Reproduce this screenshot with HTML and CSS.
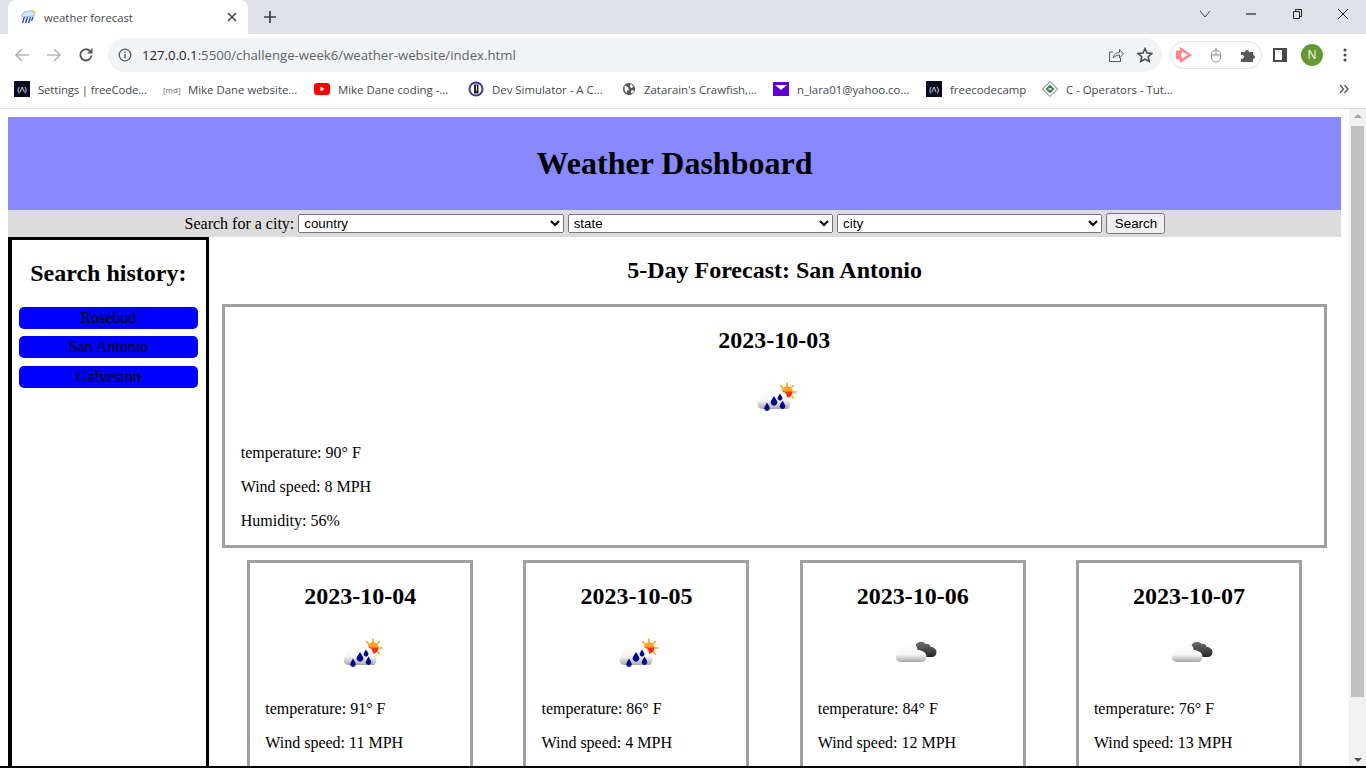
FILE: index.html
```html
<!DOCTYPE html>
<html lang="en">
<head>
  <meta charset="UTF-8" />
  <meta name="viewport" content="width=device-width, initial-scale=1.0"/>
  <title>weather forecast</title>
  <link rel="stylesheet" href="styles.css">
</head>
<body>

    <svg class="defs" width="0" height="0" aria-hidden="true">
        <defs>
            <linearGradient id="cloudFill" x1="0" y1="0" x2="0" y2="1">
                <stop offset="0" stop-color="#ffffff"/>
                <stop offset="0.6" stop-color="#f6f6f6"/>
                <stop offset="1" stop-color="#a8a8a8"/>
            </linearGradient>
            <linearGradient id="darkFill" x1="0" y1="0" x2="0" y2="1">
                <stop offset="0" stop-color="#707070"/>
                <stop offset="1" stop-color="#262626"/>
            </linearGradient>
            <filter id="soft"><feGaussianBlur stdDeviation="0.35"/></filter>
            <symbol id="rainSun" viewBox="0 0 50 50">
                <g filter="url(#soft)">
                    <g stroke="#ffa520" stroke-width="1.6" stroke-linecap="round">
                        <path d="M38 11v3M44.500 13.500l-2 2M47 20h-3M31.500 13.500l2 2M44.500 26l-2-2"/>
                    </g>
                    <circle cx="38" cy="20" r="5.500" fill="#f5300c"/>
                    <path d="M38 14.500a5.500 5.500 0 0 1 5.500 5h-11a5.500 5.500 0 0 1 5.500-5z" fill="#ffa520"/>
                    <path d="M14 37c-6 0-7-7-3-9-1-7 6-10 9-8 2-6 11-7 14 0 4 0 4 5 4 6 4 1 5 7 1 11z" fill="url(#cloudFill)"/>
                    <path d="M18 30.500l-2.400 4.200a2.800 2.800 0 1 0 4.800 0z" fill="#050a8c"/>
                    <path d="M25 24l-2.800 4.500a3.300 3.300 0 1 0 5.600 0z" fill="#050a8c"/>
                    <path d="M31 21.500l-2 3.300a2.400 2.400 0 1 0 4 0z" fill="#050a8c"/>
                    <path d="M33.500 28.500l-2.400 4.200a2.800 2.800 0 1 0 4.800 0z" fill="#050a8c"/>
                </g>
            </symbol>
            <symbol id="cloudDark" viewBox="0 0 50 50">
                <g filter="url(#soft)">
                    <path d="M26.500 21c0-6 7-10 11-5 3-1 5 1 5 3 3 0 6 2 6 5 0 3-2 5-5 5H31z" fill="url(#darkFill)"/>
                    <path d="M13 34c-5 0-7-6-3-9 0-3 2-5 5-5 2-5 9-6 12-3 2 1 2.500 3 2.500 5 4 0 9 2 9 7 0 3-2 5-5 5z" fill="url(#cloudFill)"/>
                </g>
            </symbol>
        </defs>
    </svg>

    <!-- tab strip -->
    <div class="tabstrip">
        <div class="tab">
            <svg class="favicon" viewBox="0 0 16 16" width="16" height="16">
                <path d="M3 8c-2 0-2-3 0-3 0-2 3-3 4-2 1-2 5-2 6 0 2 0 2 3 1 4z" fill="#cfe6fa" stroke="#7aa7d8" stroke-width="0.7"/>
                <path d="M12 1.500a2.500 2.500 0 0 1 3 2.500" fill="none" stroke="#f2d91a" stroke-width="1.2"/>
                <path d="M4.500 8l-2 6M7.500 8l-2 6M10.500 8l-2 6M13 8l-1.500 4" fill="none" stroke="#1030e0" stroke-width="1.2"/>
            </svg>
            <span class="tab-title">weather forecast</span>
            <svg class="tab-close" viewBox="0 0 10 10" width="10" height="10">
                <path d="M1 1l8 8M9 1l-8 8" stroke="#45484c" stroke-width="1.6"/>
            </svg>
        </div>
        <svg class="new-tab" viewBox="0 0 12 12" width="12" height="12">
            <path d="M6 0v12M0 6h12" stroke="#3c4043" stroke-width="1.7"/>
        </svg>
        <div class="window-controls">
            <svg viewBox="0 0 12 8" width="12" height="8"><path d="M1 1l5 6 5-6" fill="none" stroke="#3c4043" stroke-width="1"/></svg>
            <svg viewBox="0 0 12 8" width="12" height="8"><path d="M1 4h10" stroke="#222" stroke-width="1.2"/></svg>
            <svg viewBox="0 0 12 12" width="12" height="12"><path d="M2.500 3.500h6v7h-6zM4.500 3.500v-2h6v7h-2" fill="none" stroke="#222" stroke-width="1"/></svg>
            <svg viewBox="0 0 12 12" width="12" height="12"><path d="M1 1l10 10M11 1l-10 10" stroke="#222" stroke-width="1"/></svg>
        </div>
    </div>

    <!-- address bar -->
    <div class="toolbar">
        <div class="nav-buttons">
            <svg viewBox="0 0 16 16" width="16" height="16"><path d="M15 8H2M8 2L2 8l6 6" fill="none" stroke="#b4b6b9" stroke-width="1.7"/></svg>
            <svg viewBox="0 0 16 16" width="16" height="16"><path d="M1 8h13M8 2l6 6-6 6" fill="none" stroke="#b4b6b9" stroke-width="1.7"/></svg>
            <svg viewBox="0 0 16 16" width="16" height="16"><path d="M13.500 8.500A5.600 5.600 0 1 1 12 4" fill="none" stroke="#55585c" stroke-width="1.8"/><path d="M14.500 1v5.500H9z" fill="#55585c"/></svg>
        </div>
        <div class="omnibox">
            <svg viewBox="0 0 14 14" width="14" height="14"><circle cx="7" cy="7" r="5.800" fill="none" stroke="#55585c" stroke-width="1.300"/><path d="M7 6v4.200M7 3.600v1.400" stroke="#55585c" stroke-width="1.400"/></svg>
            <span class="url"><span class="url-host">127.0.0.1</span>:5500/challenge-week6/weather-website/index.html</span>
            <svg class="share" viewBox="0 0 16 16" width="16" height="16"><path d="M5 5H1.500v9.500h11V11M5.500 11c.5-4 3-5.500 6-5.500V2.500L15.500 7l-4 4V8c-2.500 0-4.500 1-6 3z" fill="none" stroke="#55585c" stroke-width="1"/></svg>
            <svg viewBox="0 0 16 16" width="16" height="16"><path d="M8 1.500l2 4.500 4.800.5-3.600 3.200 1 4.800L8 12l-4.200 2.500 1-4.800L1.200 6.500 6 6z" fill="none" stroke="#45484c" stroke-width="1.500"/></svg>
        </div>
        <div class="ext-pill">
            <svg viewBox="0 0 16 16" width="16" height="16"><path d="M1 5h4V2l9 6-9 6v-3H1z" fill="none" stroke="#ff8088" stroke-width="2.400"/><path d="M1 5h4v6H1z" fill="#ff8088"/></svg>
            <svg viewBox="0 0 12 16" width="12" height="16"><rect x="1.500" y="3" width="9" height="12" rx="4.500" fill="none" stroke="#8b8d90" stroke-width="1"/><path d="M1.500 8h9M6 1v7" stroke="#8b8d90" stroke-width="1"/></svg>
            <svg viewBox="0 0 16 16" width="16" height="16"><path d="M1 5h4a2 2 0 1 1 4 0h4v3a2 2 0 1 1 0 4v3H1v-3.500a2 2 0 1 0 0-3.500z" fill="#55585c"/></svg>
        </div>
        <svg class="side-panel" viewBox="0 0 14 14" width="14" height="14"><rect x="1" y="1" width="12" height="12" fill="none" stroke="#45484c" stroke-width="2"/><rect x="9" y="1" width="4" height="12" fill="#45484c"/></svg>
        <span class="avatar">N</span>
        <svg class="menu-dots" viewBox="0 0 4 14" width="4" height="14"><circle cx="2" cy="2" r="1.500" fill="#45484c"/><circle cx="2" cy="7" r="1.500" fill="#45484c"/><circle cx="2" cy="12" r="1.500" fill="#45484c"/></svg>
    </div>

    <!-- bookmarks -->
    <div class="bookmarks">
        <a class="bookmark"><span class="fcc">(&#923;)</span>Settings | freeCode...</a>
        <a class="bookmark"><span class="md">[md]</span>Mike Dane website...</a>
        <a class="bookmark"><svg viewBox="0 0 16 12" width="16" height="12"><rect width="16" height="12" rx="3" fill="#f00"/><path d="M6.500 3.500l4 2.500-4 2.500z" fill="#fff"/></svg>Mike Dane coding -...</a>
        <a class="bookmark"><svg viewBox="0 0 16 16" width="16" height="16"><circle cx="8" cy="8" r="7.500" fill="#3a3a8c"/><circle cx="8" cy="8" r="5.500" fill="#fff"/><path d="M6 3.500h4.500v9H6z" fill="#222"/><path d="M8 4.500h1v5H8z" fill="#fff"/></svg>Dev Simulator - A C...</a>
        <a class="bookmark"><svg viewBox="0 0 16 16" width="16" height="16"><circle cx="8" cy="8" r="7" fill="#55585c"/><path d="M3 4l4 2 1 3-2 1-1 3-2-4zM10 2l3 3-2 2-2-2zM11 9l3 1-2 3-2-1z" fill="#fff"/></svg>Zatarain's Crawfish,...</a>
        <a class="bookmark"><svg viewBox="0 0 16 14" width="16" height="14"><rect width="16" height="14" fill="#6001d2"/><path d="M2 3h12L8 8z" fill="#fff"/></svg>n_lara01@yahoo.co...</a>
        <a class="bookmark"><span class="fcc">(&#923;)</span>freecodecamp</a>
        <a class="bookmark"><svg viewBox="0 0 16 16" width="16" height="16"><path d="M8 .500L15.500 8 8 15.500.500 8z" fill="#fff" stroke="#5a6a5a" stroke-width="1"/><path d="M8 3.500L12.500 8 8 12.500 3.500 8z" fill="#4c7a58"/><path d="M6.500 8h3" stroke="#fff" stroke-width="1.500"/></svg>C - Operators - Tut...</a>
        <svg class="more" viewBox="0 0 10 10" width="10" height="10"><path d="M1 1l3.500 4L1 9M5.500 1L9 5 5.500 9" fill="none" stroke="#55585c" stroke-width="1.400"/></svg>
    </div>

    <!-- page -->
    <div class="viewport">
        <div class="page">
            <header class="site-header">
                <h1>Weather Dashboard</h1>
            </header>

            <form class="search-bar">
                <label for="country">Search for a city:</label>
                <select id="country"><option>country</option></select>
                <select id="state"><option>state</option></select>
                <select id="city"><option>city</option></select>
                <button type="button">Search</button>
            </form>

            <div class="content">
                <aside class="history">
                    <h2>Search history:</h2>
                    <button type="button">Rosebud</button>
                    <button type="button">San Antonio</button>
                    <button type="button">Galveston</button>
                </aside>

                <main class="forecast">
                    <h2 class="forecast-title">5-Day Forecast: San Antonio</h2>

                    <section class="day-card today">
                        <h2>2023-10-03</h2>
                        <svg class="weather-icon"><use href="#rainSun"/></svg>
                        <p>temperature: 90° F</p>
                        <p>Wind speed: 8 MPH</p>
                        <p>Humidity: 56%</p>
                    </section>

                    <div class="day-row">
                        <section class="day-card">
                            <h2>2023-10-04</h2>
                            <svg class="weather-icon"><use href="#rainSun"/></svg>
                            <p>temperature: 91° F</p>
                            <p>Wind speed: 11 MPH</p>
                        </section>
                        <section class="day-card">
                            <h2>2023-10-05</h2>
                            <svg class="weather-icon"><use href="#rainSun"/></svg>
                            <p>temperature: 86° F</p>
                            <p>Wind speed: 4 MPH</p>
                        </section>
                        <section class="day-card">
                            <h2>2023-10-06</h2>
                            <svg class="weather-icon"><use href="#cloudDark"/></svg>
                            <p>temperature: 84° F</p>
                            <p>Wind speed: 12 MPH</p>
                        </section>
                        <section class="day-card">
                            <h2>2023-10-07</h2>
                            <svg class="weather-icon"><use href="#cloudDark"/></svg>
                            <p>temperature: 76° F</p>
                            <p>Wind speed: 13 MPH</p>
                        </section>
                    </div>
                </main>
            </div>
        </div>

        <div class="scrollbar">
            <span class="arrow-up"></span>
            <div class="thumb"></div>
            <span class="arrow-down"></span>
        </div>
    </div>

</body>
</html>
```

FILE: styles.css
```css
html, body
{
    margin: 0;
    padding: 0;
    height: 768px;
    overflow: hidden;
}

body
{
    display: flex;
    flex-direction: column;
    background: #fff;
    border-bottom: 2px solid #000;
    box-sizing: border-box;
    font-family: "Liberation Serif", serif;
    font-size: 16px;
    color: #000;
}

.defs
{
    display: block;
    height: 0;
}

/* browser chrome */

.tabstrip
{
    flex: none;
    height: 34px;
    display: flex;
    align-items: center;
    background: #dee1e6;
    font-family: "Open Sans", sans-serif;
}

.tab
{
    width: 240px;
    height: 34px;
    margin-left: 8px;
    padding: 0 11px 0 12px;
    box-sizing: border-box;
    display: flex;
    align-items: center;
    background: #fff;
    border-radius: 8px 8px 0 0;
}

.tab-title
{
    flex: 1;
    margin-left: 8px;
    font-size: 11.3px;
    color: #45484c;
}

.new-tab
{
    margin-left: 16px;
}

.window-controls
{
    margin-left: auto;
    display: flex;
    align-items: center;
    gap: 34px;
    padding: 0 17px 6px 0;
}

.toolbar
{
    flex: none;
    height: 41px;
    display: flex;
    align-items: center;
    background: #fff;
}

.nav-buttons
{
    display: flex;
    align-items: center;
    gap: 16px;
    margin-left: 14px;
}

.omnibox
{
    width: 1054px;
    height: 34px;
    margin-left: 14px;
    padding: 0 9px 0 10px;
    box-sizing: border-box;
    display: flex;
    align-items: center;
    gap: 13px;
    background: #f1f3f4;
    border-radius: 17px;
}

.url
{
    flex: 1;
    margin-left: -3px;
    font-family: "Open Sans", sans-serif;
    font-size: 13.2px;
    color: #5f6368;
}

.url-host
{
    color: #202124;
}

.ext-pill
{
    width: 92px;
    height: 28px;
    margin-left: 8px;
    padding-left: 5px;
    box-sizing: border-box;
    display: flex;
    align-items: center;
    gap: 18px;
    border: 1px solid #dee1e6;
    border-radius: 15px;
}

.side-panel
{
    margin-left: 11px;
}

.avatar
{
    width: 22px;
    height: 22px;
    margin-left: 14px;
    border-radius: 50%;
    background: #669933;
    color: #fff;
    font-family: "Open Sans", sans-serif;
    font-size: 12px;
    line-height: 22px;
    text-align: center;
}

.menu-dots
{
    margin-left: 20px;
}

.bookmarks
{
    flex: none;
    height: 34px;
    display: flex;
    align-items: center;
    gap: 16px;
    padding: 0 0 5px 14px;
    box-sizing: border-box;
    background: #fff;
    border-bottom: 1px solid #d8dadd;
    font-family: "Open Sans", sans-serif;
    font-size: 11.4px;
    color: #45484c;
}

.bookmark
{
    display: flex;
    align-items: center;
    gap: 8px;
    white-space: nowrap;
}

.bookmark:nth-child(1) { width: 133px; letter-spacing: -0.15px; }
.bookmark:nth-child(2) { width: 135px; gap: 7px; }
.bookmark:nth-child(3) { width: 138px; }
.bookmark:nth-child(4) { width: 138px; }
.bookmark:nth-child(5) { width: 135px; }
.bookmark:nth-child(6) { width: 137px; }
.bookmark:nth-child(7) { width: 100px; }

.fcc
{
    flex: none;
    width: 16px;
    height: 16px;
    background: #0a0a23;
    color: #fff;
    font-size: 8px;
    line-height: 16px;
    text-align: center;
}

.md
{
    width: 18px;
    font-size: 8px;
    color: #666;
}

.more
{
    margin-left: auto;
    margin-right: 17px;
}

/* page */

.viewport
{
    flex: 1;
    min-height: 0;
    display: flex;
}

.page
{
    flex: 1;
    min-width: 0;
    padding: 8px 8px 0;
    overflow: hidden;
}

.scrollbar
{
    flex: none;
    width: 17px;
    display: flex;
    flex-direction: column;
    align-items: center;
    background: #f1f1f1;
}

.thumb
{
    width: 13px;
    height: 571px;
    margin-top: 8px;
    background: #c1c1c1;
}

.arrow-up, .arrow-down
{
    width: 0;
    height: 0;
    border-left: 4px solid transparent;
    border-right: 4px solid transparent;
}

.arrow-up
{
    margin-top: 5px;
    border-bottom: 4px solid #a3a3a3;
}

.arrow-down
{
    margin-top: auto;
    margin-bottom: 4px;
    border-top: 4px solid #505050;
}

.site-header
{
    height: 93px;
    display: flex;
    align-items: center;
    justify-content: center;
    background: #8888ff;
}

.site-header h1
{
    margin: 0;
    font-size: 32px;
}

.search-bar
{
    height: 27px;
    display: flex;
    align-items: center;
    justify-content: center;
    gap: 4px;
    background: #dcdcdc;
}

.search-bar label
{
    margin-left: 1px;
}

.search-bar select
{
    width: 265.4px;
    height: 19px;
    padding: 0 0 0 1px;
    font-family: "Liberation Sans", sans-serif;
    font-size: 13.33px;
}

.search-bar button
{
    width: 59px;
    height: 21px;
    padding: 0;
    font-family: "Liberation Sans", sans-serif;
    font-size: 13.33px;
}

.content
{
    display: flex;
}

.history
{
    flex: none;
    width: 200.6px;
    height: 560px;
    padding: 0 8px 0 7px;
    box-sizing: border-box;
    border: 3px solid #000;
    border-left-width: 4px;
}

.history h2
{
    margin: 20px 0 19.6px;
    font-size: 24px;
    text-align: center;
}

.history button
{
    display: block;
    width: 100%;
    height: 22px;
    margin-bottom: 7.5px;
    padding: 0;
    border: none;
    border-radius: 5px;
    background: #0000ff;
    color: #000;
    font-family: "Liberation Serif", serif;
    font-size: 16px;
}

.forecast
{
    flex: 1;
    min-width: 0;
    padding: 0 14px 0 13.6px;
}

.forecast-title
{
    margin: 20px 0;
    font-size: 24px;
    text-align: center;
}

.day-card
{
    padding: 0 16px;
    box-sizing: border-box;
    border: 3px solid #a0a0a0;
}

.day-card h2
{
    margin: 20px 0 18px;
    font-size: 24px;
    text-align: center;
}

.day-card p
{
    margin: 16px 0;
}

.weather-icon
{
    display: block;
    width: 50px;
    height: 50px;
    margin: 0 auto 22px;
}

.today
{
    height: 244px;
    padding-left: 15.5px;
}

.day-row
{
    display: flex;
    justify-content: space-around;
    margin-top: 12px;
}

.day-row .day-card
{
    width: 226px;
    height: 300px;
    padding: 0 15px;
}
```
